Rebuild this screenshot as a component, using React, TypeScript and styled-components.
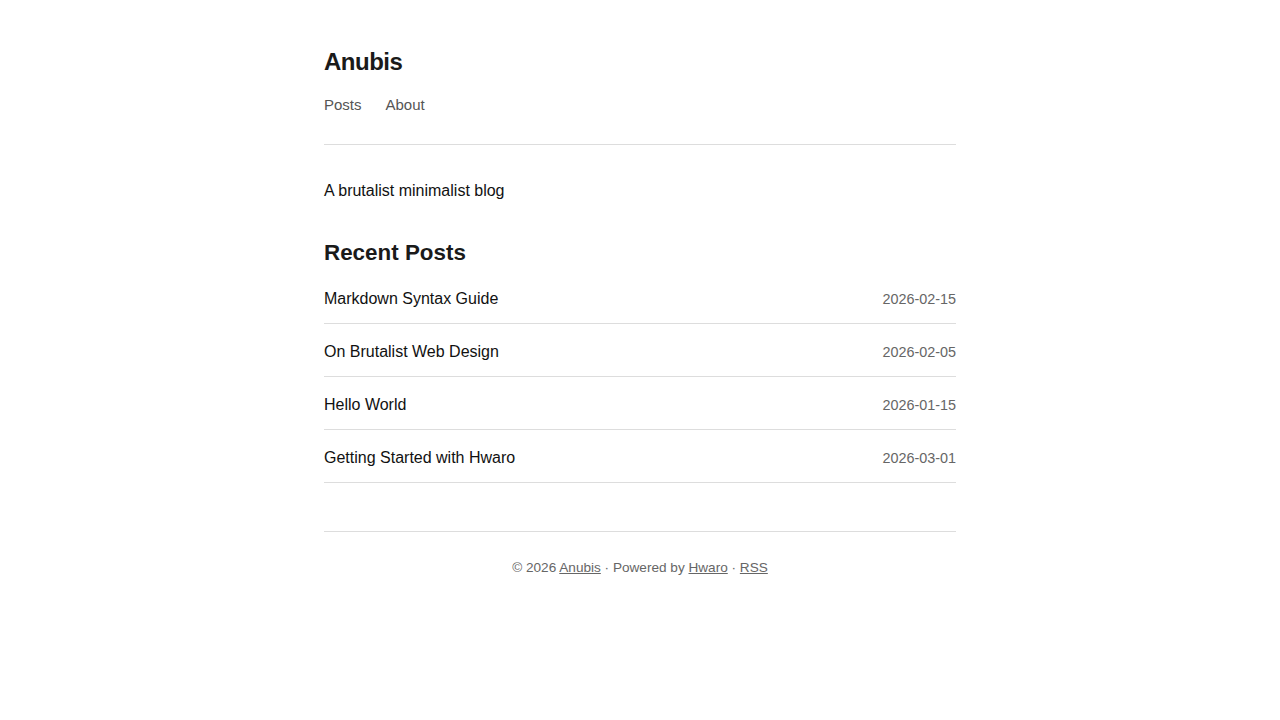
import React from 'react'
import styled, { createGlobalStyle } from 'styled-components'

const posts = [
    { title: 'Markdown Syntax Guide', date: '2026-02-15' },
    { title: 'On Brutalist Web Design', date: '2026-02-05' },
    { title: 'Hello World', date: '2026-01-15' },
    { title: 'Getting Started with Hwaro', date: '2026-03-01' },
]

export default function App() {
    return (
        <>
            <GlobalStyle />
            <Page>
                <Header>
                    <SiteTitle>Anubis</SiteTitle>
                    <Nav>
                        <a href='#'>Posts</a>
                        <a href='#'>About</a>
                    </Nav>
                </Header>
                <main>
                    <Tagline>A brutalist minimalist blog</Tagline>
                    <SectionTitle>Recent Posts</SectionTitle>
                    <PostList>
                        {posts.map(p => (
                            <PostRow key={p.title}>
                                <a href='#'>{p.title}</a>
                                <time>{p.date}</time>
                            </PostRow>
                        ))}
                    </PostList>
                </main>
                <Footer>
                    © 2026 <a href='#'>Anubis</a> · Powered by <a href='#'>Hwaro</a> · <a href='#'>RSS</a>
                </Footer>
            </Page>
        </>
    )
}

const GlobalStyle = createGlobalStyle`
    body {
        margin: 0;
        background: #fff;
        color: #111;
        font-family: "Liberation Sans", Arial, sans-serif;
    }
`

const Page = styled.div`
    max-width: 632px;
    margin: 0 auto;
    padding: 48px 0;
`

const Header = styled.header`
    padding-bottom: 28px;
    border-bottom: 1px solid #ddd;
`

const SiteTitle = styled.h1`
    margin: 0;
    font-size: 24px;
    line-height: 1.2;
    font-weight: 700;
    letter-spacing: -0.5px;
    color: #1a1a1a;
`

const Nav = styled.nav`
    display: flex;
    gap: 24px;
    margin-top: 17px;
    font-size: 15px;
    line-height: 1.5;

    a {
        color: #555;
        text-decoration: none;
    }
`

const Tagline = styled.p`
    margin: 33px 0 0;
    font-size: 16px;
    line-height: 1.6;
    color: #111;
`

const SectionTitle = styled.h2`
    margin: 34px 0 3.5px;
    font-size: 22.4px;
    line-height: 1.3;
    font-weight: 700;
    color: #1a1a1a;
`

const PostList = styled.ul`
    list-style: none;
    margin: 0;
    padding: 0;
`

const PostRow = styled.li`
    display: flex;
    justify-content: space-between;
    align-items: baseline;
    padding: 14px 0 10px;
    line-height: 28px;
    border-bottom: 1px solid #ddd;

    a {
        font-size: 16px;
        color: #111;
        text-decoration: none;
    }

    time {
        font-size: 14.4px;
        color: #666;
    }
`

const Footer = styled.footer`
    margin-top: 48px;
    padding-top: 26px;
    border-top: 1px solid #ddd;
    text-align: center;
    font-size: 13.6px;
    line-height: 1.5;
    color: #666;

    a {
        color: #666;
    }
`
